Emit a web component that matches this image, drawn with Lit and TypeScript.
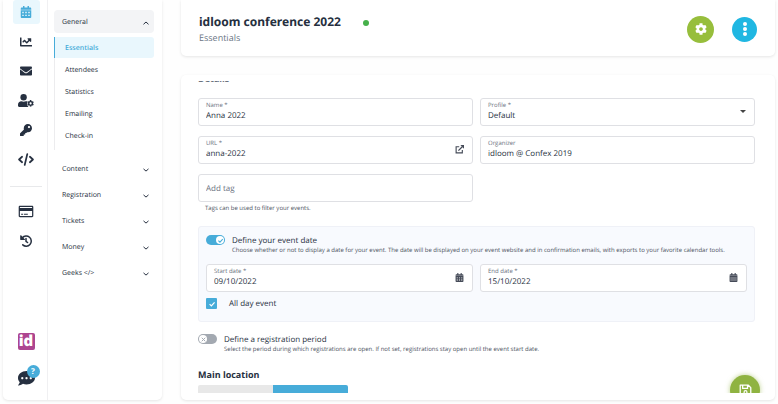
import { LitElement, html, css, svg, type TemplateResult } from "lit";
import { customElement, property } from "lit/decorators.js";
import { classMap } from "lit/directives/class-map.js";

const COG =
  "M487.4 315.7l-42.6-24.6c4.3-23.2 4.3-47 0-70.2l42.6-24.6c4.9-2.8 7.1-8.6 5.5-14-11.1-35.6-30-67.8-54.7-94.6-3.8-4.1-10-5.1-14.8-2.3L380.8 110c-17.9-15.4-38.5-27.3-60.8-35.1V25.8c0-5.6-3.9-10.5-9.4-11.7-36.7-8.2-74.3-7.8-109.2 0-5.5 1.2-9.4 6.1-9.4 11.7V75c-22.2 7.9-42.8 19.8-60.8 35.1L88.7 85.5c-4.9-2.8-11-1.9-14.8 2.3-24.7 26.7-43.6 58.9-54.7 94.6-1.7 5.4.6 11.2 5.5 14L67.3 221c-4.3 23.2-4.3 47 0 70.2l-42.6 24.6c-4.9 2.8-7.1 8.6-5.5 14 11.1 35.6 30 67.8 54.7 94.6 3.8 4.1 10 5.1 14.8 2.3l42.6-24.6c17.9 15.4 38.5 27.3 60.8 35.1v49.2c0 5.6 3.9 10.5 9.4 11.7 36.7 8.2 74.3 7.8 109.2 0 5.5-1.2 9.4-6.1 9.4-11.7v-49.2c22.2-7.9 42.8-19.8 60.8-35.1l42.6 24.6c4.9 2.8 11 1.9 14.8-2.3 24.7-26.7 43.6-58.9 54.7-94.6 1.5-5.5-.7-11.3-5.6-14.1zM256 336c-44.1 0-80-35.9-80-80s35.9-80 80-80 80 35.9 80 80-35.9 80-80 80z";

const CAL_TOP =
  "M400 64h-48V16c0-9-7-16-16-16h-32c-9 0-16 7-16 16v48H160V16c0-9-7-16-16-16h-32c-9 0-16 7-16 16v48H48C21 64 0 85 0 112v48h448v-48c0-27-21-48-48-48z";
const cell = (x: number, y: number) => `M${x} ${y}v54h64v-54z`;
const CAL_GRID =
  "M0 176v288c0 27 21 48 48 48h352c27 0 48-21 48-48V176z" +
  [64, 192, 320].map((x) => cell(x, 250) + cell(x, 374)).join("");
const CAL_LINES =
  "M0 176v288c0 27 21 48 48 48h352c27 0 48-21 48-48V176zM40 250h368v22H40zM40 330h368v22H40zM40 410h368v22H40z";

type Icon = { box: string; body: TemplateResult };
const icons: Record<string, Icon> = {
  calendar: {
    box: "0 0 448 512",
    body: svg`<path fill-rule="evenodd" d=${CAL_TOP}/><path fill-rule="evenodd" d=${CAL_GRID}/>`,
  },
  calendarDay: {
    box: "0 0 448 512",
    body: svg`<path d=${CAL_TOP}/><path fill-rule="evenodd" d=${CAL_LINES}/>`,
  },
  chart: {
    box: "0 0 512 512",
    body: svg`<path d="M496 384H64V80c0-9-7-16-16-16H16C7 64 0 71 0 80v336c0 18 14 32 32 32h464c9 0 16-7 16-16v-32c0-9-7-16-16-16zM464 96H346c-21 0-32 26-17 41l32 32-73 73-73-73c-13-13-33-13-46 0l-64 64c-7 6-7 16 0 23l22 22c7 7 17 7 23 0l42-41 73 73c13 13 33 13 46 0l95-96 32 32c15 15 41 5 41-17V112c0-9-7-16-15-16z"/>`,
  },
  mail: {
    box: "0 0 512 512",
    body: svg`<path d="M502.3 190.8c3.9-3.1 9.7-.2 9.7 4.7V400c0 26.5-21.5 48-48 48H48c-26.5 0-48-21.5-48-48V195.6c0-5 5.7-7.8 9.7-4.7 22.4 17.4 52.1 39.5 154.1 113.6 21.1 15.4 56.7 47.8 92.2 47.6 35.7.3 72-32.8 92.3-47.6 102-74.1 131.6-96.3 154-113.7zM256 320c23.2.4 56.6-29.2 73.4-41.4 132.7-96.3 142.8-104.7 173.4-128.7 5.8-4.5 9.2-11.5 9.2-18.9v-19c0-26.5-21.5-48-48-48H48c-26.5 0-48 21.5-48 48v19c0 7.4 3.4 14.3 9.2 18.9 30.6 23.9 40.7 32.4 173.4 128.7 16.8 12.2 50.2 41.8 73.4 41.4z"/>`,
  },
  user: {
    box: "0 0 640 512",
    body: svg`<circle cx="224" cy="128" r="128"/><path d="M314 288c-30 14-60 16-90 16s-60-2-90-16C60 288 0 348 0 422v42c0 27 21 48 48 48h376c-20-10-32-30-32-50l-30-30 20-40-20-50 30-38c-20-10-50-16-78-16z"/><g transform="translate(368 236) scale(.53)"><path d=${COG}/></g>`,
  },
  key: {
    box: "0 0 512 512",
    body: svg`<path d="M512 176.001C512 273.203 433.202 352 336 352c-11.22 0-22.19-1.062-32.827-3.069l-24.012 27.014A23.999 23.999 0 0 1 261.223 384H224v40c0 13.255-10.745 24-24 24h-40v40c0 13.255-10.745 24-24 24H24c-13.255 0-24-10.745-24-24v-78.059c0-6.365 2.529-12.47 7.029-16.971l161.802-161.802C163.108 213.814 160 195.271 160 176 160 78.798 238.797.001 335.999 0 433.488-.001 512 78.511 512 176.001zM336 128c0 26.51 21.49 48 48 48s48-21.49 48-48-21.49-48-48-48-48 21.49-48 48z"/>`,
  },
  code: {
    box: "0 0 640 512",
    body: svg`<path fill="none" stroke="currentColor" stroke-width="68" stroke-linecap="round" stroke-linejoin="round" d="M164 146L42 256l122 110M476 146l122 110-122 110M372 36L268 476"/>`,
  },
  card: {
    box: "0 0 576 512",
    body: svg`<path fill-rule="evenodd" d="M48 32h480c27 0 48 21 48 48v352c0 27-21 48-48 48H48c-27 0-48-21-48-48V80c0-27 21-48 48-48zM48 80v36h480V80zM48 236v196h480V236zM96 340h80v48H96zM210 340h150v48H210z"/>`,
  },
  history: {
    box: "0 0 512 512",
    body: svg`<path fill="none" stroke="currentColor" stroke-width="64" stroke-linecap="round" stroke-linejoin="round" d="M100 120A216 216 0 1 1 118 420M256 150v120l66 50"/><path d="M8 30v160c0 12 10 22 22 22h160c20 0 28-22 15-36L46 15C32 2 8 10 8 30z"/>`,
  },
  chat: {
    box: "0 0 512 512",
    body: svg`<path fill-rule="evenodd" d="M256 32C115 32 0 125 0 240c0 48 20 91 53 126-12 46-50 87-51 88-2 2-3 6-1 9 1 3 4 5 7 5 67 0 117-32 142-52 32 12 68 20 106 20 141 0 256-93 256-196S397 32 256 32zM128 210a34 34 0 1 0 1 0zM256 210a34 34 0 1 0 1 0zM384 210a34 34 0 1 0 1 0z"/>`,
  },
  cog: { box: "0 0 512 512", body: svg`<path d=${COG}/>` },
  dots: {
    box: "0 0 4 14",
    body: svg`<circle cx="2" cy="2" r="2"/><circle cx="2" cy="7" r="2"/><circle cx="2" cy="12" r="2"/>`,
  },
  up: {
    box: "0 0 8 8",
    body: svg`<path fill="none" stroke="currentColor" stroke-width="1" d="M1.500 5.300L4 3l2.500 2.300"/>`,
  },
  down: {
    box: "0 0 8 8",
    body: svg`<path fill="none" stroke="currentColor" stroke-width="1" d="M1.500 2.900L4 5.100l2.500-2.200"/>`,
  },
  external: {
    box: "0 0 16 16",
    body: svg`<path fill="none" stroke="currentColor" stroke-width="2" d="M7.500 3H2v11h11V9"/><path fill="none" stroke="currentColor" stroke-width="2.200" d="M6 10l7-7"/><path d="M9.500 0H16v6.500z"/>`,
  },
  save: {
    box: "0 0 16 16",
    body: svg`<path fill="none" stroke="currentColor" stroke-width="1.600" stroke-linejoin="round" d="M1.500 1.500h10l3 3v10h-13zM4.500 1.500v4h6v-4"/><circle cx="8" cy="10" r="1.800" fill="none" stroke="currentColor" stroke-width="1.400"/>`,
  },
  check: {
    box: "0 0 10 10",
    body: svg`<path fill="none" stroke="currentColor" stroke-width="1.500" d="M2 5.200l2.200 2.200L8.200 3"/>`,
  },
  cross: {
    box: "0 0 10 10",
    body: svg`<path fill="none" stroke="currentColor" stroke-width="1.400" d="M2.500 2.500l5 5M7.500 2.500l-5 5"/>`,
  },
};

const icon = (name: string, cls = "") =>
  html`<svg class="icon ${cls}" viewBox=${icons[name].box} fill="currentColor" aria-hidden="true">${icons[name].body}</svg>`;

const base = css`
  *, *::before { box-sizing: border-box; }
  :host { box-sizing: border-box; font-family: "Open Sans", "Noto Sans", sans-serif; color: #263040; text-rendering: geometricPrecision; }
  .icon { display: block; flex: none; width: 12px; height: 12px; }
  button, input, select { font: inherit; color: inherit; text-rendering: inherit; margin: 0; padding: 0; border: 0; background: none; }
  a { color: inherit; text-decoration: none; }
`;

@customElement("side-nav")
export class SideNav extends LitElement {
  static styles = [
    base,
    css`
      :host { display: flex; background: #fff; border-radius: 0 0 5px 5px; box-shadow: 0 1px 3px #0000001a; }
      .rail { width: 45px; border-right: 1px solid #f0f0f2; display: flex; flex-direction: column; align-items: center; padding: 0 0 12px 2px; }
      .group { display: flex; flex-direction: column; align-items: center; justify-content: space-between; height: 172px; }
      .short { height: 54px; }
      .tile { width: 27px; height: 24px; display: grid; place-items: center; border-radius: 3px; }
      .active { background: #e9f7fd; color: #47acd9; }
      .wide { width: 16px; height: 13px; }
      .rule { width: 32px; height: 1px; margin: 14px 0 12px; background: #e8e9eb; border: 0; }
      .foot { margin-top: auto; display: flex; flex-direction: column; align-items: center; gap: 20px; }
      .logo { width: 17px; height: 17px; border-radius: 2px; background: #ad4590; color: #fff; font-size: 15px; line-height: 17px; font-weight: 800; text-align: center; }
      .help { position: relative; display: block; width: 17px; height: 18px; }
      .chat { width: 17px; height: 17px; }
      .mark { position: absolute; left: 9px; top: -5px; width: 13px; height: 13px; border-radius: 50%; background: #47acd9; color: #fff; font-size: 8px; line-height: 13px; font-weight: 700; text-align: center; }
      .menu { flex: 1; padding: 10px 8px 0 6px; font-size: 7px; line-height: 10px; }
      .section { width: 100%; height: 26px; padding: 2px 4px 0 8px; display: flex; align-items: center; justify-content: space-between; text-align: left; }
      .open { height: 23px; background: #f3f4f6; border-radius: 4px; }
      .chev { width: 8px; height: 8px; }
      .sub { margin: 4px 0 6px; padding: 0 0 4px; border-left: 1px solid #ececee; display: flex; flex-direction: column; gap: 1px; list-style: none; }
      .link { display: flex; align-items: center; height: 21px; padding: 2px 0 0 10px; border-radius: 0 3px 3px 0; }
      .current { margin-left: -1px; border-left: 1px solid #47acd9; background: #e9f7fd; color: #47acd9; font-weight: 600; }
    `,
  ];

  render() {
    const tile = (name: string, label: string, wide = false, active = false) =>
      html`<a href="#" aria-label=${label} class=${classMap({ tile: true, active })}>${icon(name, wide ? "wide" : "")}</a>`;
    return html`
      <nav class="rail" aria-label="Sections">
        <div class="group">
          ${tile("calendar", "Event", false, true)} ${tile("chart", "Reports")} ${tile("mail", "Mail")}
          ${tile("user", "Users", true)} ${tile("key", "Access")} ${tile("code", "Developers", true)}
        </div>
        <hr class="rule" />
        <div class="group short">${tile("card", "Billing", true)} ${tile("history", "History")}</div>
        <div class="foot">
          <a href="#" class="logo">id</a>
          <a href="#" class="help" aria-label="Help">${icon("chat", "chat")}<span class="mark">?</span></a>
        </div>
      </nav>
      <nav class="menu" aria-label="Event">
        <button class="section open" aria-expanded="true">General ${icon("up", "chev")}</button>
        <ul class="sub">
          ${["Essentials", "Attendees", "Statistics", "Emailing", "Check-in"].map(
            (t, i) => html`<li><a href="#" class=${classMap({ link: true, current: i === 0 })}>${t}</a></li>`,
          )}
        </ul>
        ${["Content", "Registration", "Tickets", "Money", "Geeks </>"].map(
          (t) => html`<button class="section" aria-expanded="false">${t} ${icon("down", "chev")}</button>`,
        )}
      </nav>
    `;
  }
}

@customElement("form-field")
export class FormField extends LitElement {
  @property() label = "";
  @property() value = "";
  @property() placeholder = "";
  @property() glyph = "";
  @property({ type: Boolean }) select = false;

  static styles = [
    base,
    css`
      :host { display: block; min-width: 0; }
      .box { position: relative; height: 28px; border: 1px solid #dfe0e4; border-radius: 3px; background: #fff; padding: 2px 7px; display: flex; flex-direction: column; }
      .box:focus-within { border-color: #47acd9; }
      .label { font-size: 6px; line-height: 9px; color: #6b7280; }
      .input { width: 100%; height: 12px; font-size: 8px; line-height: 12px; outline: none; appearance: none; }
      .input::placeholder { color: #6b7280; opacity: 1; }
      .plain { height: 24px; }
      .mark { position: absolute; right: 8px; top: 8px; width: 9px; height: 9px; color: #454b58; }
      .arrow { position: absolute; right: 8px; top: 11px; border: 3px solid transparent; border-top-color: #444; border-bottom: 0; }
    `,
  ];

  render() {
    return html`<div class="box">
      ${this.label ? html`<label class="label" for="f">${this.label}</label>` : ""}
      ${this.select
        ? html`<select id="f" class="input"><option>${this.value}</option></select><span class="arrow"></span>`
        : html`<input id="f" type="text" class=${classMap({ input: true, plain: !this.label })} .value=${this.value}
            placeholder=${this.placeholder} aria-label=${this.label || this.placeholder} />`}
      ${this.glyph ? icon(this.glyph, "mark") : ""}
    </div>`;
  }
}

@customElement("toggle-row")
export class ToggleRow extends LitElement {
  @property({ type: Boolean }) on = false;
  @property() label = "";
  @property() hint = "";

  static styles = [
    base,
    css`
      :host { display: flex; gap: 7px; align-items: flex-start; }
      .switch { position: relative; flex: none; width: 19px; height: 10px; border-radius: 5px; background: #a3a9b1; }
      .on { background: #47acd9; }
      .native { position: absolute; inset: 0; width: 100%; height: 100%; opacity: 0; }
      .knob { position: absolute; left: 1px; top: 1px; width: 8px; height: 8px; border-radius: 50%; background: #fff; color: #a3a9b1; display: grid; place-items: center; }
      .on .knob { left: auto; right: 1px; color: #47acd9; }
      .tick { width: 7px; height: 7px; }
      .text { display: flex; flex-direction: column; padding-top: 1px; }
      .label { font-size: 8px; line-height: 10px; }
      .hint { font-size: 6px; line-height: 9px; margin: 0; color: #4b5260; }
    `,
  ];

  render() {
    return html`
      <span class=${classMap({ switch: true, on: this.on })}>
        <span class="knob">${icon(this.on ? "check" : "cross", "tick")}</span>
        <input id="t" class="native" type="checkbox" role="switch" .checked=${this.on} />
      </span>
      <div class="text">
        <label class="label" for="t">${this.label}</label>
        <p class="hint">${this.hint}</p>
      </div>
    `;
  }
}

@customElement("app-root")
export class AppRoot extends LitElement {
  static styles = [
    base,
    css`
      :host { display: grid; grid-template-columns: 159px minmax(0, 1fr); grid-template-rows: minmax(0, 1fr); gap: 19px; height: 100vh; padding: 0 3px 4px; background: #fefefe; overflow: hidden; }
      .main { min-width: 0; min-height: 0; display: flex; flex-direction: column; gap: 19px; }
      .card { background: #fff; border-radius: 5px; box-shadow: 0 1px 3px #0000001a; }
      .head { flex: none; height: 56px; padding: 2px 18px 0; display: flex; align-items: center; border-radius: 0 0 5px 5px; }
      .titles { display: flex; flex-direction: column; }
      .title { margin: 0; font-family: "Noto Sans", sans-serif; font-size: 12px; line-height: 17px; font-weight: 700; }
      .crumb { margin: 0; font-size: 9px; line-height: 15px; color: #6b7685; }
      .status { width: 6px; height: 6px; margin: 0 auto 12px 22px; border-radius: 50%; background: #46b04a; }
      .round { display: grid; place-items: center; border-radius: 50%; color: #fff; }
      .green { width: 27px; height: 27px; background: #97be3c; margin-right: 18px; }
      .blue { width: 25px; height: 25px; background: #20b7e2; }
      .dots { width: 4px; height: 14px; }
      .body { position: relative; flex: 1; min-height: 0; padding: 6px 0 7px; }
      .scroll { height: 100%; overflow: hidden; padding: 0 20px 0 17px; }
      .content { margin-top: -9px; }
      .h2 { margin: 0; font-size: 9px; line-height: 14px; font-weight: 700; }
      .first { color: #6b7280; }
      .grid { display: grid; grid-template-columns: 1fr 1fr; gap: 10px 7px; }
      .top { margin-top: 12px; }
      .note { margin: 2px 0 0 7px; font-size: 6px; line-height: 9px; color: #4b5260; }
      .panel { margin-top: 13px; padding: 8px 7px 12px; background: #f8fafe; border: 1px solid #eff1f7; border-radius: 3px; }
      .dates { margin-top: 9px; }
      .check { display: flex; align-items: center; gap: 12px; margin-top: 6px; font-size: 8px; line-height: 11px; }
      .box { position: relative; width: 11px; height: 11px; background: #47acd9; color: #fff; border-radius: 1px; display: grid; place-items: center; }
      .native { position: absolute; inset: 0; width: 100%; height: 100%; opacity: 0; }
      .tick { width: 8px; height: 8px; }
      .period { margin-top: 12px; }
      .place { margin-top: 14px; }
      .tabs { display: flex; margin-top: 3px; border-radius: 2px; overflow: hidden; width: 150px; }
      .tab { flex: 1; height: 20px; background: #e8e8e8; }
      .picked { background: #47acd9; }
      .dock { position: absolute; right: 0; bottom: 7px; width: 60px; height: 24px; overflow: hidden; padding: 6px 0 0 15px; }
      .save { width: 30px; height: 30px; background: #8fb341; box-shadow: 0 0 5px #8fb34199; }
      .disk { width: 13px; height: 13px; }
    `,
  ];

  render() {
    return html`
      <side-nav></side-nav>
      <main class="main">
        <header class="card head">
          <div class="titles">
            <h1 class="title">idloom conference 2022</h1>
            <p class="crumb">Essentials</p>
          </div>
          <span class="status"></span>
          <button class="round green" aria-label="Settings">${icon("cog")}</button>
          <button class="round blue" aria-label="More">${icon("dots", "dots")}</button>
        </header>
        <section class="card body">
          <div class="scroll">
            <div class="content">
              <h2 class="h2 first">Details</h2>
              <div class="grid top">
                <form-field label="Name *" value="Anna 2022"></form-field>
                <form-field label="Profile *" value="Default" select></form-field>
                <form-field label="URL *" value="anna-2022" glyph="external"></form-field>
                <form-field label="Organizer" value="idloom @ Confex 2019"></form-field>
                <div>
                  <form-field placeholder="Add tag"></form-field>
                  <p class="note">Tags can be used to filter your events.</p>
                </div>
              </div>
              <div class="panel">
                <toggle-row on label="Define your event date"
                  hint="Choose whether or not to display a date for your event. The date will be displayed on your event website and in confirmation emails, with exports to your favorite calendar tools."></toggle-row>
                <div class="grid dates">
                  <form-field label="Start date *" value="09/10/2022" glyph="calendar"></form-field>
                  <form-field label="End date *" value="15/10/2022" glyph="calendarDay"></form-field>
                </div>
                <label class="check">
                  <span class="box">${icon("check", "tick")}<input class="native" type="checkbox" checked /></span>
                  All day event
                </label>
              </div>
              <toggle-row class="period" label="Define a registration period"
                hint="Select the period during which registrations are open. If not set, registrations stay open until the event start date."></toggle-row>
              <h2 class="h2 place">Main location</h2>
              <div class="tabs">
                <button class="tab" aria-label="Online"></button>
                <button class="tab picked" aria-label="On site"></button>
              </div>
            </div>
          </div>
          <div class="dock"><button class="round save" aria-label="Save">${icon("save", "disk")}</button></div>
        </section>
      </main>
    `;
  }
}
